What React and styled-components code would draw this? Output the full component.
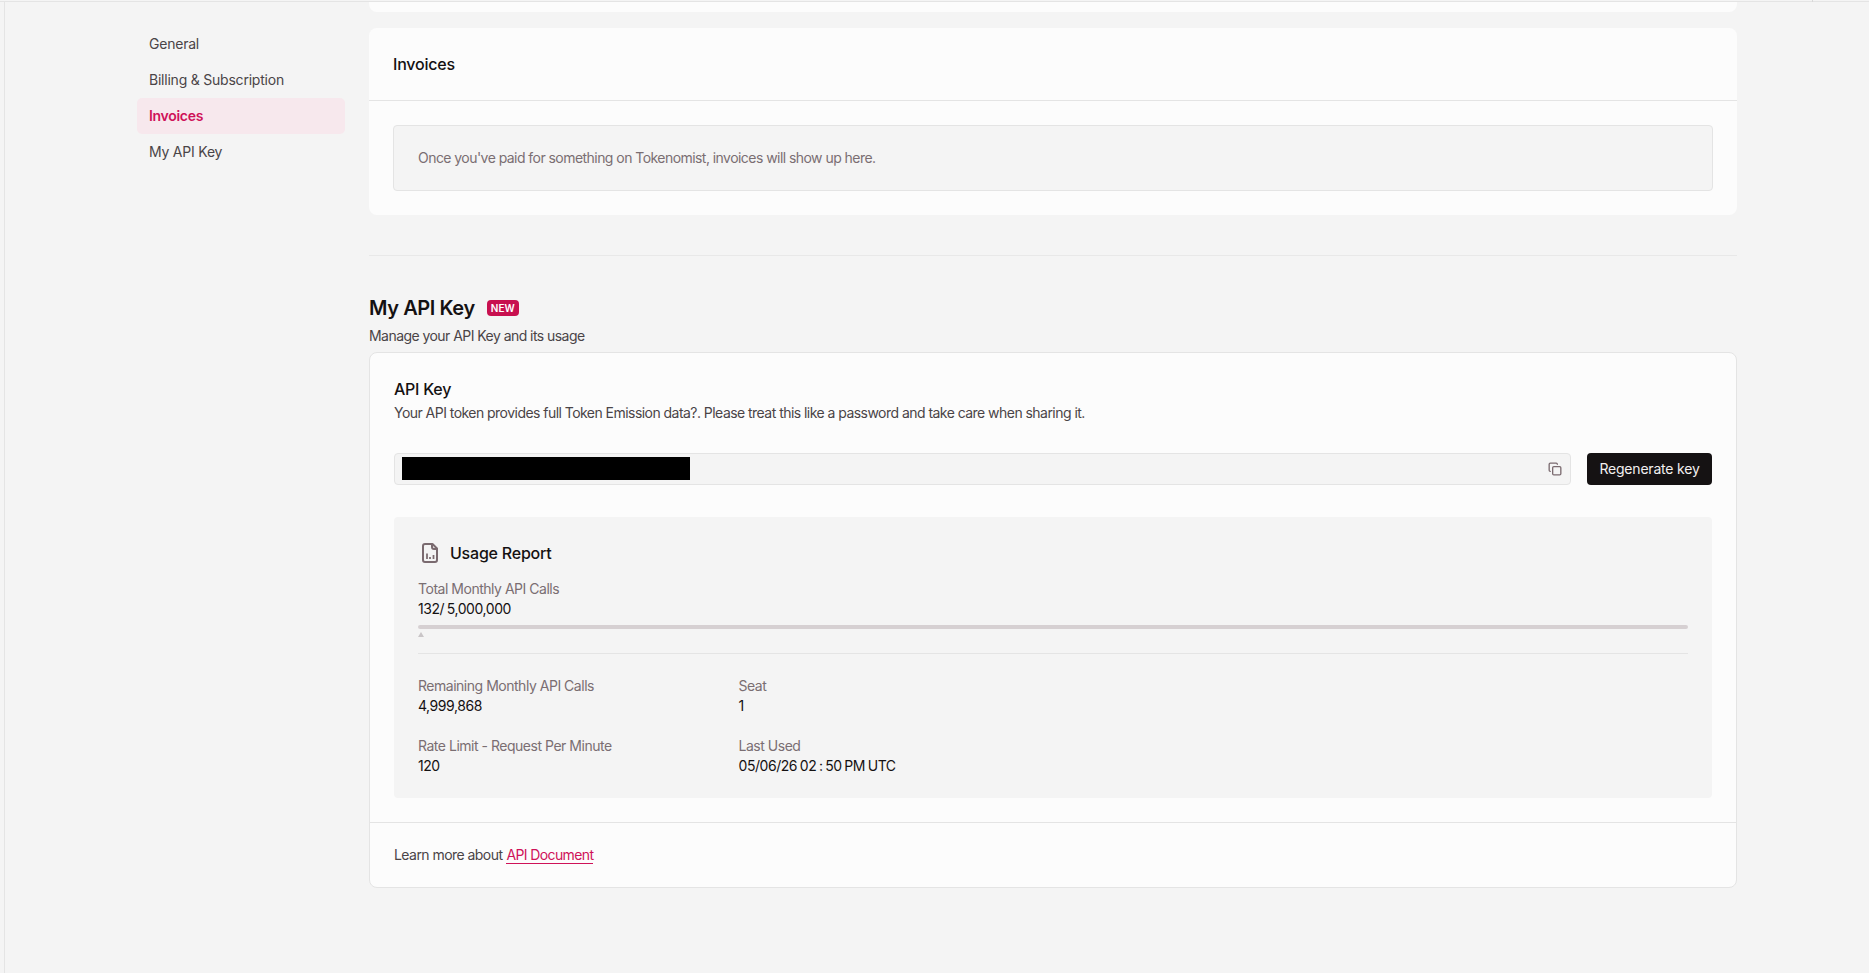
import React from "react";
import styled, { createGlobalStyle } from "styled-components";
import { Copy } from "lucide-react";

const GlobalStyle = createGlobalStyle`
  html, body {
    margin: 0;
    height: 100%;
    overflow: hidden;
    background: #f4f4f4;
  }
  body {
    font-family: Inter, "Noto Sans", sans-serif;
    font-size: 14px;
    line-height: 20px;
    color: #141112;
  }
  * { box-sizing: border-box; }
`;

const TopRule = styled.div`
  position: relative;
  height: 2px;
  border-bottom: 1px solid #e4e4e4;
  &::after {
    content: "";
    position: absolute;
    left: 1812px;
    top: 0;
    width: 1px;
    height: 2px;
    background: #d8d8d8;
  }
`;

const Frame = styled.div`
  display: flex;
  gap: 24px;
  height: 971px;
  margin-left: 4px;
  padding-left: 132px;
  border-left: 1px solid #e4e4e4;
`;

const Sidebar = styled.nav`
  display: flex;
  flex-direction: column;
  flex: none;
  width: 208px;
  padding-top: 24px;
`;

const NavItem = styled.a`
  display: flex;
  align-items: center;
  height: 36px;
  padding-left: 12px;
  border-radius: 5px;
  letter-spacing: ${(p) => (p.$active ? "-0.3px" : "-0.22px")};
  color: ${(p) => (p.$active ? "#cf1259" : "#4a4447")};
  background: ${(p) => (p.$active ? "#f7e8ed" : "transparent")};
  font-weight: ${(p) => (p.$active ? 600 : 400)};
`;

const Content = styled.main`
  display: flex;
  flex-direction: column;
  flex: none;
  width: 1368px;
`;

const StubCard = styled.div`
  height: 10px;
  background: #fcfcfc;
  border-radius: 0 0 8px 8px;
`;

const PlainCard = styled.section`
  margin-top: 16px;
  background: #fcfcfc;
  border-radius: 8px;
`;

const CardHeader = styled.h2`
  display: flex;
  align-items: center;
  height: 73px;
  margin: 0;
  padding-left: 24px;
  border-bottom: 1px solid #e4e4e4;
  font-size: 16px;
  font-weight: 500;
  letter-spacing: -0.2px;
`;

const CardBody = styled.div`
  padding: 24px;
`;

const EmptyNotice = styled.div`
  display: flex;
  align-items: center;
  height: 66px;
  padding-left: 24px;
  background: #f4f4f4;
  border: 1px solid #e4e4e4;
  border-radius: 4px;
  letter-spacing: -0.55px;
  color: #7a6e72;
`;

const SectionRule = styled.hr`
  width: 100%;
  height: 1px;
  margin: 40px 0 38px;
  border: 0;
  background: #e8e8e8;
`;

const TitleRow = styled.div`
  display: flex;
  align-items: center;
  gap: 12px;
  height: 28px;
`;

const Title = styled.h1`
  margin: 0;
  font-size: 20px;
  font-weight: 600;
  letter-spacing: -0.42px;
`;

const NewBadge = styled.span`
  display: flex;
  align-items: center;
  justify-content: center;
  width: 32px;
  height: 16px;
  border-radius: 4px;
  background: #c8104f;
  color: #fff;
  font-size: 10px;
  font-weight: 600;
`;

const Subtitle = styled.p`
  margin: 4px 0 6px;
  letter-spacing: -0.55px;
  color: #4a4447;
`;

const KeyCard = styled.section`
  background: #fcfcfc;
  border: 1px solid #e4e4e4;
  border-radius: 8px;
`;

const KeyBody = styled.div`
  padding: 24px 24px 24px;
  border-bottom: 1px solid #e4e4e4;
`;

const KeyTitle = styled.h3`
  margin: 0 0 2px;
  font-size: 16px;
  line-height: 24px;
  font-weight: 500;
  letter-spacing: -0.25px;
`;

const KeyHint = styled.p`
  margin: 0 0 30px;
  letter-spacing: -0.54px;
  color: #4a4447;
`;

const KeyRow = styled.div`
  display: flex;
  gap: 16px;
  margin-bottom: 32px;
`;

const KeyField = styled.div`
  display: flex;
  align-items: center;
  justify-content: space-between;
  flex: 1;
  height: 32px;
  padding: 0 8px 0 7px;
  background: #f4f4f4;
  border: 1px solid #e4e4e4;
  border-radius: 4px;
  color: #7a6a6f;
`;

const Redacted = styled.div`
  width: 288px;
  height: 23px;
  margin-top: -1px;
  background: #000;
`;

const PrimaryButton = styled.button`
  flex: none;
  width: 125px;
  height: 32px;
  padding: 0;
  border: 0;
  border-radius: 4px;
  background: #151213;
  color: #f2f0f0;
  font: inherit;
  letter-spacing: -0.2px;
`;

const UsageBox = styled.div`
  padding: 24px 24px 22px;
  background: #f4f4f4;
  border-radius: 4px;
`;

const UsageHeader = styled.div`
  display: flex;
  align-items: center;
  gap: 9px;
  height: 24px;
  margin-bottom: 14px;
  font-size: 16px;
  font-weight: 500;
  letter-spacing: -0.22px;
`;

const UsageIcon = styled.svg`
  flex: none;
  width: 24px;
  height: 24px;
  margin-right: -1px;
  fill: none;
  stroke: #7a6a6f;
  stroke-width: 2;
  stroke-linejoin: round;
`;

const Label = styled.div`
  letter-spacing: -0.48px;
  color: #7a6e72;
`;

const Value = styled.div`
  letter-spacing: -0.45px;
  word-spacing: -0.8px;
  color: #141112;
`;

const Progress = styled.div`
  position: relative;
  height: 4px;
  margin: 6px 0 24px;
  border-radius: 2px;
  background: #d6d0d2;
  &::after {
    content: "";
    position: absolute;
    left: 0;
    top: 7px;
    border-left: 3px solid transparent;
    border-right: 3px solid transparent;
    border-bottom: 5px solid #c9c5c7;
  }
`;

const UsageRule = styled.hr`
  height: 1px;
  margin: 0 0 22px;
  border: 0;
  background: #e4e4e4;
`;

const StatGrid = styled.div`
  display: grid;
  grid-template-columns: 320.5px 1fr;
  row-gap: 20px;
`;

const KeyFooter = styled.div`
  display: flex;
  align-items: center;
  gap: 4px;
  height: 64px;
  padding-left: 24px;
  letter-spacing: -0.55px;
  color: #4a4447;
`;

const DocLink = styled.a`
  color: #cf1259;
  border-bottom: 1px solid #cf1259;
  line-height: 17px;
  letter-spacing: -0.62px;
`;

const navItems = ["General", "Billing & Subscription", "Invoices", "My API Key"];

const stats = [
  ["Remaining Monthly API Calls", "4,999,868"],
  ["Seat", "1"],
  ["Rate Limit - Request Per Minute", "120"],
  ["Last Used", "05/06/26 02 : 50 PM UTC"],
];

export default function App() {
  return (
    <>
      <GlobalStyle />
      <TopRule />
      <Frame>
        <Sidebar>
          {navItems.map((item) => (
            <NavItem key={item} $active={item === "Invoices"}>
              {item}
            </NavItem>
          ))}
        </Sidebar>
        <Content>
          <StubCard />
          <PlainCard>
            <CardHeader>Invoices</CardHeader>
            <CardBody>
              <EmptyNotice>
                Once you've paid for something on Tokenomist, invoices will show up here.
              </EmptyNotice>
            </CardBody>
          </PlainCard>
          <SectionRule />
          <TitleRow>
            <Title>My API Key</Title>
            <NewBadge>NEW</NewBadge>
          </TitleRow>
          <Subtitle>Manage your API Key and its usage</Subtitle>
          <KeyCard>
            <KeyBody>
              <KeyTitle>API Key</KeyTitle>
              <KeyHint>
                Your API token provides full Token Emission data?. Please treat this like a password and take care when sharing it.
              </KeyHint>
              <KeyRow>
                <KeyField>
                  <Redacted />
                  <Copy size={14} strokeWidth={2.25} />
                </KeyField>
                <PrimaryButton>Regenerate key</PrimaryButton>
              </KeyRow>
              <UsageBox>
                <UsageHeader>
                  <UsageIcon viewBox="0 0 24 24">
                    <path d="M14.5 3H7a2 2 0 0 0-2 2v14a2 2 0 0 0 2 2h10a2 2 0 0 0 2-2V7.5z" />
                    <path d="M14 3v3a2 2 0 0 0 2 2h3" />
                    <path d="M9 18v-5.5M12 18v-2M15.5 18v-4" strokeWidth={1.75} />
                  </UsageIcon>
                  Usage Report
                </UsageHeader>
                <Label>Total Monthly API Calls</Label>
                <Value>132/ 5,000,000</Value>
                <Progress />
                <UsageRule />
                <StatGrid>
                  {stats.map(([label, value]) => (
                    <div key={label}>
                      <Label>{label}</Label>
                      <Value>{value}</Value>
                    </div>
                  ))}
                </StatGrid>
              </UsageBox>
            </KeyBody>
            <KeyFooter>
              Learn more about <DocLink>API Document</DocLink>
            </KeyFooter>
          </KeyCard>
        </Content>
      </Frame>
    </>
  );
}
